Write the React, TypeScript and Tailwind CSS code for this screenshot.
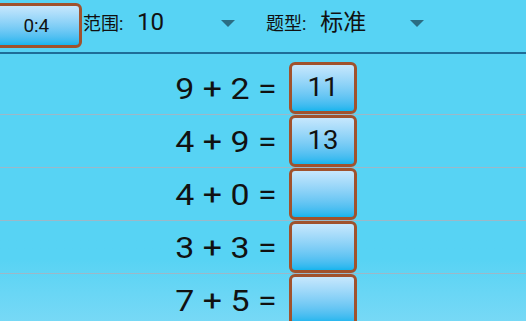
import React from 'react';

const problems = [
  { a: 9, b: 2, answer: '11' },
  { a: 4, b: 9, answer: '13' },
  { a: 4, b: 0, answer: '' },
  { a: 3, b: 3, answer: '' },
  { a: 7, b: 5, answer: '' },
];

function Caret() {
  return (
    <svg width="14" height="7" viewBox="0 0 14 7" className="block">
      <polygon points="0,0 14,0 7,7" fill="#2b6d83" />
    </svg>
  );
}

function AnswerBox({ value }: { value: string }) {
  return (
    <div className="w-[68px] h-[52px] shrink-0 rounded-[6px] border-[3px] border-[#a0522d] bg-gradient-to-b from-[#c6e7fd] to-[#12b5ee] flex items-center justify-center text-[25px] text-[#111]">
      <span className="inline-block scale-x-[1.1]">{value}</span>
    </div>
  );
}

export default function App() {
  return (
    <div
      className="w-[526px] h-[321px] overflow-hidden bg-[#57d3f4] flex flex-col"
      style={{ fontFamily: 'Roboto, "Noto Sans CJK SC", sans-serif' }}
    >
      {/* top bar */}
      <div className="h-[54px] shrink-0 border-b-2 border-[#1e6d98] flex items-start">
        <div className="mt-[3px] -ml-[10px] w-[92px] h-[45px] shrink-0 rounded-[6px] border-[3px] border-[#a0522d] bg-gradient-to-b from-[#c6e7fd] to-[#12b5ee] flex items-center justify-center text-[18px] text-[#111]">
          <span className="inline-block scale-x-[1.05]">0:4</span>
        </div>
        <div className="flex items-center h-[46px] ml-[1px] w-[182px]">
          <span className="text-[18px] text-[#111]">范围:</span>
          <span className="ml-[14px] text-[23px] text-[#111] inline-block scale-x-[1.05] origin-left">10</span>
          <span className="ml-[58px]"><Caret /></span>
        </div>
        <div className="flex items-center h-[46px]">
          <span className="text-[18px] text-[#111] ml-[1px]">题型:</span>
          <span className="ml-[14px] text-[23px] text-[#111]">标准</span>
          <span className="ml-[44px]"><Caret /></span>
        </div>
      </div>

      {/* problem list */}
      <div className="flex-1 flex flex-col pt-[8px] bg-gradient-to-b from-[#57d3f4] from-[75%] to-[#79d9f6]">
        {problems.map((p, i) => (
          <div key={i} className="shrink-0 flex flex-col">
            <div className="h-[52px] flex items-center">
              <div className="w-[289px] pr-[12px] flex justify-end">
                <span className="inline-block text-[30px] text-[#111] whitespace-nowrap scale-x-[1.13] origin-right">
                  {p.a} + {p.b} =
                </span>
              </div>
              <AnswerBox value={p.answer} />
            </div>
            <div className="h-px shrink-0 bg-[#9cb8c8]" />
          </div>
        ))}
      </div>
    </div>
  );
}
